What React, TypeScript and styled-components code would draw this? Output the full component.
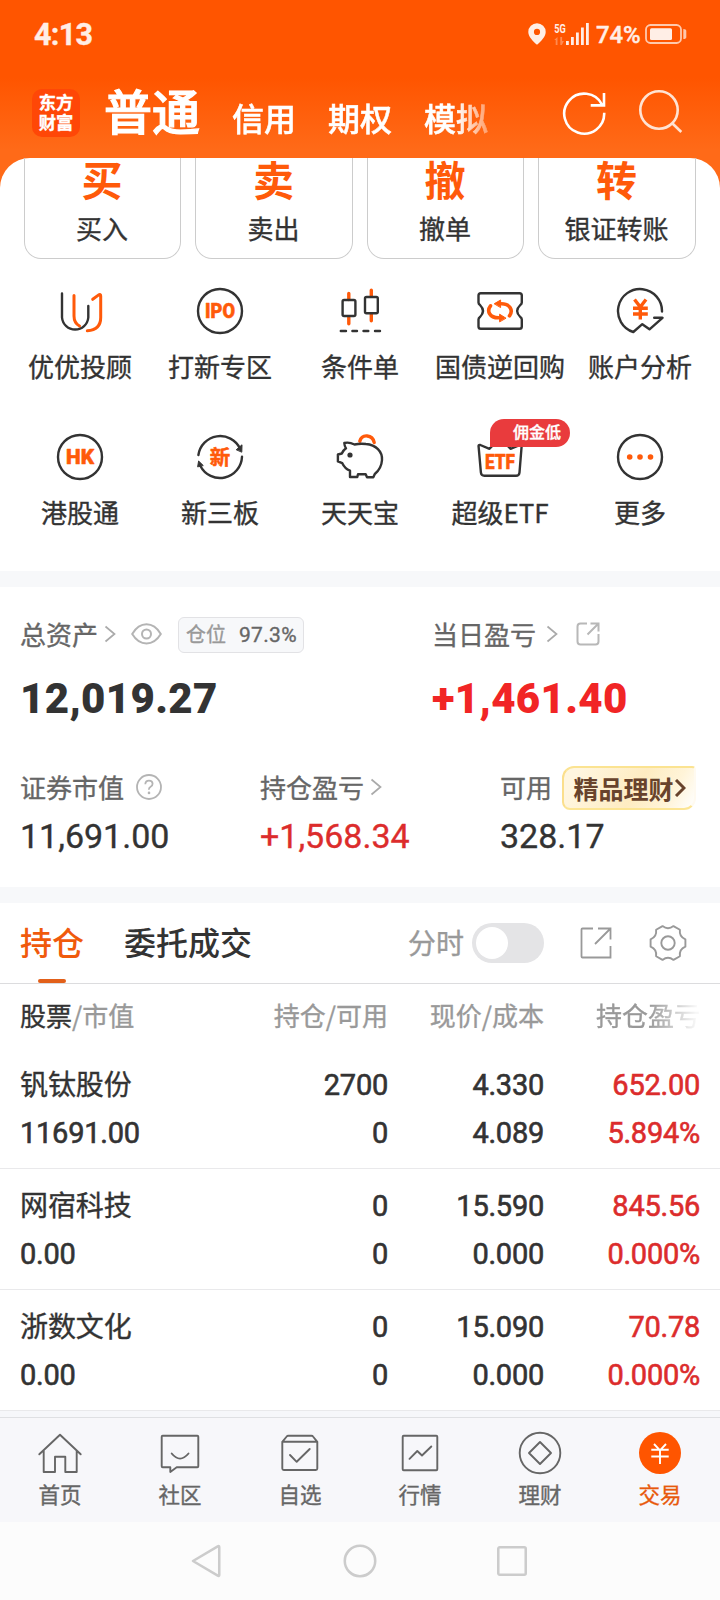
import React from 'react';
import styled, { createGlobalStyle, css } from 'styled-components';

const ORANGE = '#ff5a0a';
const INK = '#333333';
const RED = '#dc2c2c';

const GlobalStyle = createGlobalStyle`
  * { box-sizing: border-box; }
  body {
    margin: 0;
    background: #fff;
    color: ${INK};
    font-family: "Noto Sans CJK SC", "Noto Sans", sans-serif;
    font-weight: 400;
    -webkit-text-stroke-width: 0.35px;
  }
`;

const numeric = css`
  font-family: Roboto, "Noto Sans CJK SC", sans-serif;
`;

const Screen = styled.div`
  width: 720px;
  height: 1600px;
  overflow: hidden;
  display: flex;
  flex-direction: column;
`;

/* ---------- Header ---------- */

const Hero = styled.div`
  height: 258px;
  flex: none;
  background: linear-gradient(#ff5500 0, #ff5500 78px, #ff6a18 150px, #ff6a18 100%);
`;

const StatusBar = styled.div`
  height: 68px;
  display: flex;
  align-items: center;
  justify-content: space-between;
  padding: 0 33px 0 34px;
  color: #ffeee6;
  ${numeric}
`;

const Clock = styled.span`
  font-size: 30.5px;
  font-weight: 700;
  letter-spacing: -0.7px;
`;

const StatusIcons = styled.div`
  display: flex;
  align-items: center;
`;

const Battery = styled.span`
  font-size: 24px;
  font-weight: 500;
  width: 44px;
  letter-spacing: -0.2px;
  margin: 2px 5px 0 6px;
`;

const TitleBar = styled.div`
  height: 90px;
  display: flex;
  align-items: flex-start;
  padding: 0 32px;
`;

const Logo = styled.div`
  width: 48px;
  height: 48px;
  margin-top: 21px;
  border-radius: 10px;
  background: #ff4707;
  color: #fff;
  font-size: 17.3px;
  font-weight: 700;
  line-height: 20.5px;
  text-align: center;
  padding-top: 2.5px;
`;

const Accounts = styled.div`
  display: flex;
  gap: 32px;
  margin-left: 24px;
  width: 390px;
  white-space: nowrap;
  color: #fff;
  -webkit-text-stroke-width: 0.5px;
  mask-image: linear-gradient(90deg, #000 352px, rgba(0, 0, 0, 0.35) 386px);
`;

const Account = styled.span<{ $active?: boolean }>`
  font-size: ${p => (p.$active ? 48 : 32)}px;
  line-height: 50px;
  padding-top: ${p => (p.$active ? 16 : 23.5)}px;
  font-weight: 500;
  ${p => p.$active && css`-webkit-text-stroke-width: 1.2px;`}
`;

const HeaderTools = styled.div`
  display: flex;
  gap: 27px;
  margin-left: auto;
  margin-top: 20px;
  margin-right: 5.5px;
`;

/* ---------- Actions ---------- */

const Sheet = styled.div`
  height: 100px;
  padding: 0 24.5px 0 24px;
  background: #fff;
  border-radius: 30px 30px 0 0;
  display: grid;
  grid-template-columns: repeat(4, 1fr);
  gap: 14.4px;
`;

const ActionCard = styled.div`
  height: 101px;
  border: 1.5px solid #ccc;
  border-top: 0;
  border-radius: 0 0 17px 17px;
  display: flex;
  flex-direction: column;
  align-items: center;
`;

const ActionGlyph = styled.b`
  font-size: 41px;
  line-height: 42px;
  margin: -1.5px 1px 0 0;
  color: ${ORANGE};
  font-weight: 700;
  -webkit-text-stroke-width: 0;
`;

const ActionLabel = styled.span`
  font-size: 26px;
  line-height: 36px;
  margin-top: 11.5px;
  margin-right: 1px;
`;

const Services = styled.div`
  height: 313px;
  flex: none;
  padding: 29px 10px 0;
  display: grid;
  grid-template-columns: repeat(5, 140px);
  grid-auto-rows: 146px;
`;

const Service = styled.div`
  position: relative;
  display: flex;
  flex-direction: column;
  align-items: center;
  font-size: 26px;
  line-height: 36px;
  white-space: nowrap;
  svg { margin-bottom: 13px; flex: none; }
`;

const Ribbon = styled.span`
  position: absolute;
  left: 60px;
  top: -14px;
  width: 80px;
  height: 28px;
  padding-left: 23px;
  background: #e93b3d;
  color: #fff;
  border-radius: 14px 14px 14px 0;
  font-size: 16px;
  line-height: 25px;
  font-weight: 500;
`;

const Band = styled.div`
  height: 16px;
  flex: none;
  background: #f7f8fa;
`;

/* ---------- Summary ---------- */

const Summary = styled.section`
  height: 300px;
  flex: none;
  padding-left: 20px;
`;

const SummaryRow = styled.div<{ $columns: string; $top: number }>`
  display: grid;
  grid-template-columns: ${p => p.$columns};
  padding-top: ${p => p.$top}px;
`;

const Caption = styled.div`
  display: flex;
  align-items: center;
  height: 44px;
  font-size: 26px;
  line-height: 44px;
  color: #666;
  svg { flex: none; }
`;

const Position = styled.span`
  display: flex;
  gap: 13px;
  width: 126px;
  height: 36px;
  margin: 2px 0 0 16px;
  padding-left: 7px;
  border: 1.5px solid #e2e2e5;
  border-radius: 6px;
  background: #f7f8fa;
  font-size: 20px;
  line-height: 32px;
  color: #999;
  b {
    ${numeric}
    color: #666;
    font-weight: 400;
    font-size: 21px;
    line-height: 34px;
    letter-spacing: 0.3px;
  }
`;

const Total = styled.div<{ $up?: boolean }>`
  ${numeric}
  font-size: 42px;
  font-weight: 900;
  line-height: 50px;
  margin-top: 17.5px;
  letter-spacing: 0.35px;
  -webkit-text-stroke-width: 0;
  color: ${p => (p.$up ? '#f12525' : INK)};
`;

const Amount = styled.div<{ $up?: boolean }>`
  ${numeric}
  font-size: 34px;
  line-height: 40px;
  margin-top: 7px;
  color: ${p => (p.$up ? RED : INK)};
`;

const Promo = styled.span`
  display: flex;
  align-items: center;
  width: 134px;
  height: 44px;
  margin: 1px 0 0 10px;
  padding-left: 9.5px;
  border: 2px solid;
  border-color: #fbe391 #fffaf0 #fce594 #fbdf8c;
  border-radius: 12px 4px 12px 8px;
  background: linear-gradient(120deg, #fff6e0 10%, #feecc2 55%, #fff4d8 80%, #fff 100%);
  color: #68432c;
  font-weight: 700;
  font-size: 25px;
  line-height: 36px;
  white-space: nowrap;
  -webkit-text-stroke-width: 0;
`;

/* ---------- Holdings ---------- */

const TabBar = styled.div`
  height: 81px;
  flex: none;
  display: flex;
  align-items: center;
  padding: 0 32px 0 20px;
  border-bottom: 1px solid #dcdcde;
`;

const Tab = styled.div<{ $active?: boolean }>`
  position: relative;
  font-size: 32px;
  line-height: 80px;
  margin-top: -5px;
  height: 80px;
  font-weight: 500;
  margin-right: 40px;
  -webkit-text-stroke-width: 0;
  color: ${p => (p.$active ? '#f05a0c' : INK)};
  ${p => p.$active && css`
    &::after {
      content: '';
      position: absolute;
      left: 18px;
      bottom: -2px;
      width: 28px;
      height: 4px;
      border-radius: 2px;
      background: #e2601a;
    }
  `}
`;

const MinuteLabel = styled.span`
  margin: -3px 8px 0 auto;
  font-size: 28px;
  color: #999;
`;

const Toggle = styled.span`
  width: 72px;
  height: 40px;
  padding: 4px;
  border-radius: 20px;
  background: #e4e4e6;
  margin-right: 34px;
  &::after {
    content: '';
    display: block;
    width: 32px;
    height: 32px;
    border-radius: 50%;
    background: #fff;
  }
`;

const HoldingGrid = styled.div`
  display: grid;
  grid-template-columns: 208px 160px 156px 156px;
  padding: 0 20px;
`;

const ColumnHeads = styled(HoldingGrid)`
  height: 64px;
  flex: none;
  font-size: 26px;
  line-height: 62px;
  color: #999;
  text-align: right;
  white-space: nowrap;
  b { font-weight: 400; color: ${INK}; }
  span:first-child { text-align: left; }
  span:last-child {
    mask-image: linear-gradient(90deg, #000 105px, rgba(0, 0, 0, 0.08) 152px);
  }
`;

const Holding = styled(HoldingGrid)`
  height: 121px;
  flex: none;
  padding-top: 13px;
  border-bottom: 1px solid #e9e9eb;
`;

const Cell = styled.div<{ $tone?: string }>`
  ${numeric}
  font-size: 29px;
  font-weight: 400;
  letter-spacing: -0.25px;
  -webkit-text-stroke-width: 0.6px;
  line-height: 48px;
  text-align: right;
  color: ${p => p.$tone ?? INK};
  &:first-child { text-align: left; }
`;

const Name = styled.div`
  font-family: "Noto Sans CJK SC", sans-serif;
  font-size: 28px;
  font-weight: 400;
  letter-spacing: -0.1px;
  height: 48px;
  line-height: 45px;
  -webkit-text-stroke-width: 0.35px;
`;

/* ---------- Bottom ---------- */

const TableEnd = styled.div`
  height: 6px;
  flex: none;
  background: #f6f7fa;
`;

const BottomNav = styled.nav`
  height: 105px;
  flex: none;
  display: grid;
  grid-template-columns: repeat(6, 120px);
  background: #f7f7fa;
  border-top: 1px solid #dfe0e3;
`;

const NavItem = styled.div<{ $active?: boolean }>`
  display: flex;
  flex-direction: column;
  align-items: center;
  padding-top: 11px;
  font-size: 21.5px;
  line-height: 30px;
  color: ${p => (p.$active ? '#e8590c' : '#666')};
  svg { margin-bottom: 1.5px; }
`;

const SystemNav = styled.div`
  height: 78px;
  flex: none;
  display: flex;
  justify-content: center;
  gap: 116px;
  align-items: center;
  background: #fcfcfc;
`;

/* ---------- Icons ---------- */

type IconProps = { color?: string; width?: number; size?: number; children: React.ReactNode };

const Icon = ({ color = INK, width = 2.4, size = 48, children }: IconProps) => (
  <svg width={size} height={size} viewBox="0 0 48 48" fill="none" stroke={color}
    strokeWidth={width} strokeLinejoin="round" strokeLinecap="round">{children}</svg>
);

const iconText = {
  fill: ORANGE,
  stroke: ORANGE,
  strokeWidth: 0.5,
  fontWeight: 900,
  textAnchor: 'middle' as const,
  fontFamily: 'Roboto, "Noto Sans CJK SC", sans-serif',
};

const Chevron = ({ left = 8 }: { left?: number }) => (
  <svg width={12 + left} height="18" viewBox={`${-left} 0 ${12 + left} 18`} fill="none" stroke="#aaa" strokeWidth="1.7">
    <path d="M1.5 1.5 10.5 9 1.5 16.5" />
  </svg>
);

const services: { label: string; ribbon?: string; icon: React.ReactNode }[] = [
  {
    label: '优优投顾',
    icon: <Icon>
      <path d="M6 6.5V30.5a13.2 13.2 0 0 0 26.3 0V19" />
      <path stroke={ORANGE} strokeWidth="3" d="M18 8.5V29q0 7 5.5 10M36.7 12.3l6-4.4q2-1 2 1V30.5q0 12.5-13.4 13.3" />
    </Icon>,
  },
  {
    label: '打新专区',
    icon: <Icon>
      <circle cx="24" cy="24" r="22" />
      <text x="24" y="31" fontSize="20" textLength="30" lengthAdjust="spacingAndGlyphs" {...iconText}>IPO</text>
    </Icon>,
  },
  {
    label: '条件单',
    icon: <Icon>
      <path stroke={ORANGE} strokeWidth="3.4" d="M12.8 6.5v6M12.8 30.5v6.3M35.3 3.3v5.5M35.3 27.5v6.3" />
      <rect x="6.6" y="13" width="12.8" height="16" rx="1.5" />
      <rect x="29" y="10" width="12.8" height="16.3" rx="1.5" />
      <path d="M4.8 44h5.2M16.4 44h4.6M27.5 44h4.8M39 44h5" />
    </Icon>,
  },
  {
    label: '国债逆回购',
    icon: <Icon>
      <path d="M5 6.2H43.5Q45.8 6.2 45.8 8.5V15.5Q45.8 17 44.3 18Q38 24 44.3 30Q45.8 31 45.8 32.5V39.5Q45.8 41.8 43.5 41.8H4.8Q2.5 41.8 2.5 39.5V32.5Q2.5 31 4 30Q10 24 4 18Q2.5 17 2.5 15.5V8.5Q2.5 6.2 4.8 6.2Z" />
      <path stroke={ORANGE} strokeWidth="3.6" d="M14.5 18.8C10.5 24 13.5 30.8 22.5 30.8M33.5 28.8C37.5 23.5 34 16.8 25.5 16.8" />
      <path fill={ORANGE} stroke={ORANGE} strokeWidth="1" d="M18.5 16.6 24.6 13V20.2ZM29.7 31 23.6 27.2V34.5Z" />
    </Icon>,
  },
  {
    label: '账户分析',
    icon: <Icon>
      <path d="M46 24.5A22 22 0 1 0 17.3 45L26.3 37.2 33.5 42.3 46.5 30.8H38.2" />
      <path stroke={ORANGE} strokeWidth="3.4" strokeLinecap="butt" d="M18.5 12.5 24.3 20 30 12.5M24.3 19.5V32.5M17 21.2H31.8M17 27H31.8" />
    </Icon>,
  },
  {
    label: '港股通',
    icon: <Icon>
      <circle cx="24" cy="24" r="22" />
      <text x="24" y="31.2" fontSize="20.5" textLength="28" lengthAdjust="spacingAndGlyphs" {...iconText}>HK</text>
    </Icon>,
  },
  {
    label: '新三板',
    icon: <Icon>
      <path d="M2.4 22A22 22 0 0 1 44 15.5M46 23.8A22 22 0 0 1 4.4 33" />
      <path fill={INK} strokeWidth="1" d="M40.5 16.5 46 11.8 45.8 18.8ZM1.7 33.5 2.6 28 7 32.3Z" />
      <text x="24" y="31.5" fontSize="20.5" {...iconText} fontWeight={700}>新</text>
    </Icon>,
  },
  {
    label: '天天宝',
    icon: <Icon>
      <path stroke={ORANGE} strokeWidth="3.4" d="M23.8 8.2C26 0.5 36.5 1.5 38.2 9.5" />
      <path d="M8.3 10Q13 8.7 18.5 11.5Q24 10.3 30 11C40 11.8 46.5 18.5 46 27Q45.5 35.5 38.8 41L37.3 44.2H31L29.7 41.3H22L21.3 44H14V37.7Q8.8 35.5 6.3 30.2L1.9 28.4V21.5L5.8 20.5Q7 17.5 10 15.3Q8.5 13 8.3 10Z" />
      <circle cx="14" cy="22" r="2.6" fill={INK} stroke="none" />
    </Icon>,
  },
  {
    label: '超级ETF',
    ribbon: '佣金低',
    icon: <Icon>
      <path d="M2.6 13.5Q2.3 11.5 4.3 12L13.5 15.8Q24 4 34.5 15.8L44 12Q46 11.5 45.6 13.5L43.5 39.5Q43.2 42.8 40 42.8H8.4Q5.2 42.8 4.9 39.5Z" />
      <text x="24" y="35.8" fontSize="21" textLength="30" lengthAdjust="spacingAndGlyphs" {...iconText}>ETF</text>
    </Icon>,
  },
  {
    label: '更多',
    icon: <Icon>
      <circle cx="24" cy="24" r="22" />
      <g fill={ORANGE} stroke="none">
        <circle cx="13.7" cy="24" r="2.8" /><circle cx="24" cy="24" r="2.8" /><circle cx="34.5" cy="24" r="2.8" />
      </g>
    </Icon>,
  },
];

const actions = [['买', '买入'], ['卖', '卖出'], ['撤', '撤单'], ['转', '银证转账']];

const holdings = [
  ['钒钛股份', '11691.00', '2700', '0', '4.330', '4.089', '652.00', '5.894%'],
  ['网宿科技', '0.00', '0', '0', '15.590', '0.000', '845.56', '0.000%'],
  ['浙数文化', '0.00', '0', '0', '15.090', '0.000', '70.78', '0.000%'],
];

const navItems: { label: string; icon: React.ReactNode }[] = [
  { label: '首页', icon: <path d="M3.3 25.3 24 5.7 44.7 25.3M7.7 21.7V43H19V27.7H29.3V43H40.7V21.7" /> },
  { label: '社区', icon: <path d="M6.7 6.7H41.3Q42.3 6.7 42.3 7.7V37.3Q42.3 38.3 41.3 38.3H20.7L14.3 43V38.3H6.7Q5.7 38.3 5.7 37.3V7.7Q5.7 6.7 6.7 6.7ZM15.7 24.5Q24 34.7 32.5 24.5" /> },
  { label: '自选', icon: <path d="M6.3 12.8 10.7 7.5Q11.3 6.7 12.3 6.7H35.5Q36.5 6.7 37 7.5L41.3 12.8V39.5Q41.3 41 39.8 41H7.8Q6.3 41 6.3 39.5ZM6.3 12.8H41.3M14 26 20.7 32.8 33.7 20" /> },
  { label: '行情', icon: <path d="M7.7 6.7H40.3Q41.3 6.7 41.3 7.7V40.3Q41.3 41.3 40.3 41.3H7.7Q6.7 41.3 6.7 40.3V7.7Q6.7 6.7 7.7 6.7ZM13.5 29.8 21.3 22 26 26.5 35.3 17.5" /> },
  { label: '理财', icon: <><circle cx="24" cy="24" r="20.3" /><path d="M24 13 35 24 24 35 13 24Z" /></> },
  { label: '交易', icon: <><circle cx="24" cy="24" r="21" fill="#ff5500" stroke="none" /><path stroke="#fff" strokeLinecap="butt" d="M18 15 24 21.3 30 15M24 21V35M15.3 20.8H32.7M15.3 27.5H32.7" /></> },
];

export default function App() {
  return (
    <Screen>
      <GlobalStyle />
      <Hero>
        <StatusBar>
          <Clock>4:13</Clock>
          <StatusIcons>
            <svg width="62" height="24" viewBox="0 0 62 24" fill="#ffeee6">
              <path fillRule="evenodd" d="M9 1.3A8.7 8.7 0 0 1 17.7 10C17.7 14.5 13 19.5 9 22.7C5 19.5.3 14.5.3 10A8.7 8.7 0 0 1 9 1.3ZM9 6.8a3.1 3.1 0 1 0 0 6.2a3.1 3.1 0 1 0 0-6.2Z" />
              <text x="26.3" y="11" fontFamily="Roboto, sans-serif" fontSize="13.5" fontWeight="700" textLength="11.5" lengthAdjust="spacingAndGlyphs">5G</text>
              <path opacity=".35" d="M29.5 15v8h-1.8v-5h-1.5zM32.3 15h1.8v4h1.8l-2 4h-1.6z" />
              <path d="M38 19h2.8v4H38zM43 15h2.8v8H43zM48 10.5h2.8V23H48zM53 5.5h2.8V23H53zM58 1h2.8v22H58z" />
            </svg>
            <Battery>74%</Battery>
            <svg width="42" height="20" viewBox="0 0 42 20" fill="#ffeee6">
              <rect x="1" y="1" width="35" height="18" rx="4.5" fill="none" stroke="#ffc9ad" strokeWidth="1.8" />
              <rect x="5" y="4.3" width="22" height="11.6" rx="1.5" />
              <path opacity=".75" d="M38.3 5q3 0 3 2v6q0 2-3 2z" />
            </svg>
          </StatusIcons>
        </StatusBar>
        <TitleBar>
          <Logo>东方<br />财富</Logo>
          <Accounts>
            <Account $active>普通</Account>
            <Account>信用</Account>
            <Account>期权</Account>
            <Account>模拟</Account>
          </Accounts>
          <HeaderTools>
            <Icon color="#fff" width={2.6}>
              <path strokeLinecap="butt" strokeLinejoin="miter" d="M44.2 24.8A20 20 0 1 1 42 16.5M44 5V17.4H30.7" />
            </Icon>
            <Icon color="#ffe3d3" width={2.6}>
              <circle cx="24" cy="22" r="18.7" /><path strokeLinecap="butt" d="M36.7 34.7 46.3 44" />
            </Icon>
          </HeaderTools>
        </TitleBar>
        <Sheet>
          {actions.map(([glyph, label]) => (
            <ActionCard key={label}>
              <ActionGlyph>{glyph}</ActionGlyph>
              <ActionLabel>{label}</ActionLabel>
            </ActionCard>
          ))}
        </Sheet>
      </Hero>

      <Services>
        {services.map(s => (
          <Service key={s.label}>
            {s.icon}
            {s.label}
            {s.ribbon && <Ribbon>{s.ribbon}</Ribbon>}
          </Service>
        ))}
      </Services>
      <Band />

      <Summary>
        <SummaryRow $columns="412px 1fr" $top={25}>
          <div>
            <Caption>
              总资产<Chevron left={6} />
              <svg style={{ marginLeft: 15 }} width="31" height="22" viewBox="0 0 31 22" fill="none" stroke="#b4b4b4" strokeWidth="2">
                <path d="M1.2 11Q7 1.3 15.5 1.3T29.8 11Q24 20.5 15.5 20.5T1.2 11Z" /><circle cx="15.5" cy="11" r="4.5" />
              </svg>
              <Position>仓位<b>97.3%</b></Position>
            </Caption>
            <Total>12,019.27</Total>
          </div>
          <div>
            <Caption>
              当日盈亏<Chevron left={10} />
              <svg style={{ marginLeft: 17 }} width="26" height="26" viewBox="0 0 26 26" fill="none" stroke="#b8b8b8" strokeWidth="2">
                <path d="M12 2.5H5.5Q2.5 2.5 2.5 5.5V20.5Q2.5 23.5 5.5 23.5H20.5Q23.5 23.5 23.5 20.5V13M15.5 2.5H23.5V10.5M23 3 12.5 13.5" />
              </svg>
            </Caption>
            <Total $up>+1,461.40</Total>
          </div>
        </SummaryRow>
        <SummaryRow $columns="240px 240px 1fr" $top={41.5}>
          <div>
            <Caption>
              证券市值
              <svg style={{ marginLeft: 12 }} width="26" height="26" viewBox="0 0 26 26" fill="none" stroke="#b4b4b4" strokeWidth="1.8">
                <circle cx="13" cy="13" r="12" />
                <path d="M9.3 10.2Q9.5 6.7 13 6.7T16.6 9.8Q16.6 11.6 14.6 12.8T13 15.8" />
                <circle cx="13" cy="18.9" r="1.3" fill="#b4b4b4" stroke="none" />
              </svg>
            </Caption>
            <Amount>11,691.00</Amount>
          </div>
          <div>
            <Caption>持仓盈亏<Chevron left={6} /></Caption>
            <Amount $up>+1,568.34</Amount>
          </div>
          <div>
            <Caption>
              可用
              <Promo>
                精品理财
                <svg width="12" height="18" viewBox="0 0 12 18" fill="none" stroke="#68432c" strokeWidth="3"><path d="M2 1 10 9 2 17" /></svg>
              </Promo>
            </Caption>
            <Amount>328.17</Amount>
          </div>
        </SummaryRow>
      </Summary>
      <Band />

      <TabBar>
        <Tab $active>持仓</Tab>
        <Tab>委托成交</Tab>
        <MinuteLabel>分时</MinuteLabel>
        <Toggle />
        <svg width="36" height="36" viewBox="0 0 36 36" fill="none" stroke="#999" strokeWidth="1.8">
          <path d="M15 3.5H4.5Q3.5 3.5 3.5 4.5V31.5Q3.5 32.5 4.5 32.5H32.5V21M20 3.5H32.5V14.5M32 4 17 19" />
        </svg>
        <svg style={{ marginLeft: 34 }} width="40" height="40" viewBox="0 0 40 40" fill="none" stroke="#999" strokeWidth="1.9" strokeLinejoin="round">
          <path d="M14.5 3.1Q20 7.3 25.5 3.1L31.9 6.8Q31 13.6 37.4 16.3V23.7Q31 26.4 31.9 33.2L25.5 36.9Q20 32.7 14.5 36.9L8.1 33.2Q9 26.4 2.6 23.7V16.3Q9 13.6 8.1 6.8Z" />
          <circle cx="20" cy="20" r="6.7" />
        </svg>
      </TabBar>

      <ColumnHeads>
        <span><b>股票</b>/市值</span>
        <span>持仓/可用</span>
        <span>现价/成本</span>
        <span>持仓盈亏</span>
      </ColumnHeads>
      {holdings.map(([name, value, held, usable, price, cost, profit, rate]) => (
        <Holding key={name}>
          <Cell><Name>{name}</Name>{value}</Cell>
          <Cell>{held}<br />{usable}</Cell>
          <Cell>{price}<br />{cost}</Cell>
          <Cell $tone={RED}>{profit}<br />{rate}</Cell>
        </Holding>
      ))}
      <TableEnd />

      <BottomNav>
        {navItems.map(({ label, icon }) => (
          <NavItem key={label} $active={label === '交易'}>
            <Icon color="#666" width={1.9}>{icon}</Icon>
            {label}
          </NavItem>
        ))}
      </BottomNav>

      <SystemNav>
        <Icon color="#ccc" width={3.4} size={36}><path d="M4 24 37 4.5Q39 3.5 39 5.5V42.5Q39 44.5 37 43.5Z" /></Icon>
        <Icon color="#ccc" width={3.4} size={36}><circle cx="24" cy="24" r="20.3" /></Icon>
        <Icon color="#ccc" width={3.4} size={36}><rect x="5.7" y="5.7" width="36.6" height="36.6" rx="2" /></Icon>
      </SystemNav>
    </Screen>
  );
}
